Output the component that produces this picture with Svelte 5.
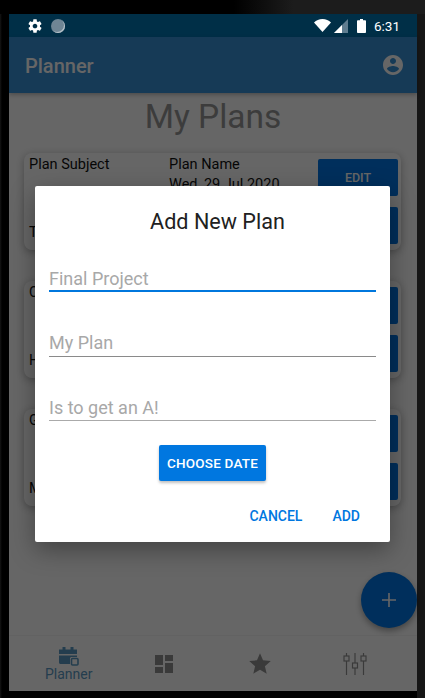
<script lang="ts">
  const plans = [
    { subject: 'Plan Subject', name: 'Plan Name', date: 'Wed, 29 Jul 2020', note: 'To do' },
    { subject: 'Calculus', name: 'Plan Name', date: 'Wed, 29 Jul 2020', note: 'Homework' },
    { subject: 'Geography', name: 'Plan Name', date: 'Wed, 29 Jul 2020', note: 'Maps' }
  ];

  const fields = [
    { placeholder: 'Final Project', kind: 'focused' },
    { placeholder: 'My Plan', kind: 'dark' },
    { placeholder: 'Is to get an A!', kind: 'light' }
  ];
</script>

<div class="device">
  <div class="screen">
    <div class="status-bar">
      <div class="status-left">
        <svg width="16" height="16" viewBox="0 0 24 24" fill="#fff">
          <path d="M19.43 12.98c.04-.32.07-.64.07-.98s-.03-.66-.07-.98l2.11-1.65c.19-.15.24-.42.12-.64l-2-3.46c-.12-.22-.39-.3-.61-.22l-2.49 1c-.52-.4-1.08-.73-1.69-.98l-.38-2.65C14.46 2.18 14.25 2 14 2h-4c-.25 0-.46.18-.49.42l-.38 2.65c-.61.25-1.17.59-1.69.98l-2.49-1c-.23-.09-.49 0-.61.22l-2 3.46c-.13.22-.07.49.12.64l2.11 1.65c-.04.32-.07.65-.07.98s.03.66.07.98l-2.11 1.65c-.19.15-.24.42-.12.64l2 3.46c.12.22.39.3.61.22l2.49-1c.52.4 1.08.73 1.69.98l.38 2.65c.03.24.24.42.49.42h4c.25 0 .46-.18.49-.42l.38-2.65c.61-.25 1.17-.59 1.69-.98l2.49 1c.23.09.49 0 .61-.22l2-3.46c.12-.22.07-.49-.12-.64l-2.11-1.65zM12 15.5c-1.93 0-3.5-1.57-3.5-3.5s1.57-3.5 3.5-3.5 3.5 1.57 3.5 3.5-1.57 3.5-3.5 3.5z" />
        </svg>
        <span class="sync-dot"></span>
      </div>
      <div class="status-right">
        <svg width="17" height="13" viewBox="0 0 17 13" fill="#fff"><path d="M0 3.6C2.2 1.4 5.2 0 8.5 0S14.8 1.4 17 3.6L8.5 13z" /></svg>
        <svg class="signal" width="14" height="14" viewBox="0 0 14 14">
          <path d="M14 0V14H0z" fill="#5f7d90" />
          <path d="M8 6V14H0z" fill="#fff" />
        </svg>
        <svg class="battery" width="9" height="14" viewBox="0 0 9 14" fill="#fff"><path d="M3 0h3v1.2h2.2c.4 0 .8.4.8.8v11.2c0 .4-.4.8-.8.8H.8c-.4 0-.8-.4-.8-.8V2c0-.4.4-.8.8-.8H3z" /></svg>
        <span class="time">6:31</span>
      </div>
    </div>

    <div class="stage">
      <header class="app-bar">
        <span class="app-title">Planner</span>
        <svg width="24" height="24" viewBox="0 0 24 24" fill="#fff">
          <path d="M12 2C6.48 2 2 6.48 2 12s4.48 10 10 10 10-4.48 10-10S17.52 2 12 2zm0 3c1.66 0 3 1.34 3 3s-1.34 3-3 3-3-1.34-3-3 1.34-3 3-3zm0 14.2c-2.5 0-4.71-1.28-6-3.22.03-1.99 4-3.08 6-3.08 1.99 0 5.97 1.09 6 3.08-1.29 1.94-3.5 3.22-6 3.22z" />
        </svg>
      </header>

      <main class="content">
        <h1>My Plans</h1>
        <div class="plan-list">
          {#each plans as plan}
            <div class="plan-card">
              <div class="plan-subject">
                <span>{plan.subject}</span>
                <span>{plan.note}</span>
              </div>
              <div class="plan-name">
                <span>{plan.name}</span>
                <span>{plan.date}</span>
              </div>
              <div class="plan-actions">
                <button type="button">EDIT</button>
                <button type="button">DELETE</button>
              </div>
            </div>
          {/each}
        </div>
      </main>

      <nav class="tab-bar">
        <div class="tab active">
          <svg width="20" height="19" viewBox="0 0 20 19">
            <path d="M0 2.5h3.5V0h3v2.5h5V0h3v2.5H18V7H0zM0 8.5h18V10h-5.5c-.8 0-1.5.7-1.5 1.5V17H1.5C.7 17 0 16.3 0 15.5z" fill="#5b9ac4" />
            <rect x="12.5" y="11.5" width="6.5" height="6.5" rx="1" fill="none" stroke="#5b9ac4" stroke-width="1.6" />
          </svg>
          <span>Planner</span>
        </div>
        <div class="tab">
          <svg width="24" height="24" viewBox="0 0 24 24" fill="#929292">
            <path d="M3 13h8V3H3v10zm0 8h8v-6H3v6zm10 0h8V11h-8v10zm0-18v6h8V3h-8z" />
          </svg>
        </div>
        <div class="tab">
          <svg width="26" height="26" viewBox="0 0 24 24" fill="#929292">
            <path d="M12 17.27L18.18 21l-1.64-7.03L22 9.24l-7.19-.61L12 2 9.19 8.63 2 9.24l5.46 4.73L5.82 21z" />
          </svg>
        </div>
        <div class="tab">
          <svg width="24" height="22" viewBox="0 0 24 22" fill="none" stroke="#929292" stroke-width="1.2">
            <path d="M3.5 0v3M3.5 8v14M12 0v10M12 15v7M20.5 0v3M20.5 8v14" />
            <rect x="1" y="3" width="5" height="5" />
            <rect x="9.5" y="10" width="5" height="5" />
            <rect x="18" y="3" width="5" height="5" />
          </svg>
        </div>
      </nav>

      <button type="button" class="fab" aria-label="Add">
        <svg width="16" height="16" viewBox="0 0 16 16" fill="none" stroke="#fff" stroke-width="1.6"><path d="M8 1v14M1 8h14" /></svg>
      </button>

      <div class="scrim">
        <div class="dialog">
          <h2>Add New Plan</h2>
          <div class="fields">
            {#each fields as field}
              <input class={field.kind} type="text" placeholder={field.placeholder} />
            {/each}
          </div>
          <button type="button" class="choose-date">CHOOSE DATE</button>
          <div class="dialog-actions">
            <button type="button">CANCEL</button>
            <button type="button">ADD</button>
          </div>
        </div>
      </div>
    </div>
  </div>
</div>

<style>
  :global(body) {
    margin: 0;
    background: #000;
    font-family: Roboto, "Liberation Sans", sans-serif;
  }

  button {
    font-family: inherit;
    border: none;
    cursor: pointer;
  }

  .device {
    box-sizing: border-box;
    width: 425px;
    height: 698px;
    padding: 14px 8px 7px 9px;
    background:
      linear-gradient(90deg, #000 0, #000 55%, #1c1c1c 69%) top / 100% 14px no-repeat,
      linear-gradient(90deg, #161616 0, #000 2px, #000 98%, #161616 98%);
  }

  .screen {
    display: flex;
    flex-direction: column;
    height: 100%;
  }

  .status-bar {
    flex: none;
    display: flex;
    align-items: center;
    justify-content: space-between;
    height: 23px;
    padding: 0 17px 0 18px;
    background: #002f47;
    color: #fff;
  }

  .status-left {
    display: flex;
    align-items: center;
    gap: 8px;
  }

  .sync-dot {
    width: 14px;
    height: 14px;
    border-radius: 50%;
    background: #6f8594;
    box-shadow: inset -1px -1px 0 #b4c0c8;
  }

  .status-right {
    display: flex;
    align-items: center;
    gap: 3px;
  }

  .battery {
    margin-left: 6px;
  }

  .time {
    margin-left: 5px;
    font-size: 13.5px;
  }

  .stage {
    position: relative;
    flex: 1;
    display: flex;
    flex-direction: column;
    min-height: 0;
    background: #fff;
  }

  .app-bar {
    flex: none;
    display: flex;
    align-items: center;
    justify-content: space-between;
    height: 56px;
    padding: 0 12px 0 16px;
    background: #3791d7;
    box-shadow: 0 2px 4px rgba(0, 0, 0, 0.25);
  }

  .app-title {
    padding-top: 2px;
    font-size: 20px;
    font-weight: 500;
    color: #fff;
  }

  .content {
    flex: 1;
    min-height: 0;
  }

  h1 {
    margin: 0 0 12px;
    font-size: 33.5px;
    font-weight: 400;
    line-height: 48px;
    text-align: center;
    color: #979797;
  }

  .plan-list {
    display: flex;
    flex-direction: column;
    gap: 31px;
    padding: 0 16px 0 15px;
  }

  .plan-card {
    display: flex;
    height: 97px;
    box-sizing: border-box;
    padding: 6px 3px 6px 5px;
    border-radius: 8px;
    background: #fff;
    box-shadow: 0 2px 8px rgba(0, 0, 0, 0.3);
    font-size: 14.5px;
    color: #111;
  }

  .plan-subject {
    display: flex;
    flex-direction: column;
    justify-content: space-between;
    width: 140px;
    margin: -3px 0 3px;
  }

  .plan-name {
    display: flex;
    flex-direction: column;
    gap: 3px;
    flex: 1;
    margin-top: -3px;
  }

  .plan-actions {
    display: flex;
    flex-direction: column;
    gap: 11px;
    width: 80px;
  }

  .plan-actions button {
    height: 37px;
    padding: 0;
    border-radius: 2px;
    background: #0077e6;
    font-size: 12.5px;
    font-weight: 500;
    color: #fff;
  }

  .tab-bar {
    flex: none;
    display: flex;
    height: 56px;
    padding: 0 14px 0 12px;
    border-top: 1px solid #f6f6f6;
    box-sizing: border-box;
  }

  .tab {
    flex: 1;
    display: flex;
    flex-direction: column;
    align-items: center;
    justify-content: center;
  }

  .tab.active {
    justify-content: flex-start;
    padding-top: 11px;
    gap: 0;
    font-size: 14px;
    line-height: 17px;
    color: #5b9ac4;
  }

  .fab {
    position: absolute;
    right: 0;
    bottom: 63px;
    display: grid;
    place-items: center;
    width: 56px;
    height: 56px;
    padding: 0;
    border-radius: 50%;
    background: #0077e6;
    box-shadow: 0 3px 6px rgba(0, 0, 0, 0.35);
  }

  .scrim {
    position: absolute;
    inset: 0;
    display: flex;
    align-items: center;
    justify-content: center;
    background: rgba(0, 0, 0, 0.6);
  }

  .dialog {
    box-sizing: border-box;
    width: 355px;
    height: 356px;
    padding: 21px 14px 0;
    border-radius: 2px;
    background: #fff;
    box-shadow: 0 8px 24px rgba(0, 0, 0, 0.35);
    display: flex;
    flex-direction: column;
    margin-left: -1px;
  }

  h2 {
    margin: 0;
    padding-left: 10px;
    font-size: 21.6px;
    font-weight: 400;
    line-height: 30px;
    text-align: center;
    color: #212121;
  }

  .fields {
    display: flex;
    flex-direction: column;
    gap: 29.5px;
    margin-top: 20px;
  }

  input {
    box-sizing: border-box;
    width: 100%;
    height: 35px;
    padding: 8px 0 0;
    border: none;
    border-bottom: 1px solid #8a8a8a;
    outline: none;
    background: none;
    font-family: inherit;
    font-size: 18px;
  }

  input::placeholder {
    color: #a8a8a8;
    opacity: 1;
  }

  input.focused {
    padding-top: 9px;
    border-bottom: 2px solid #0077dd;
  }

  input.light {
    border-bottom-color: #aaa;
  }

  .choose-date {
    align-self: center;
    height: 36px;
    width: 107px;
    margin-top: 24px;
    padding: 0;
    border-radius: 2px;
    background: #0077e0;
    box-shadow: 0 2px 3px rgba(0, 0, 0, 0.25);
    font-size: 13.5px;
    font-weight: 500;
    letter-spacing: 0.2px;
    color: #fff;
  }

  .dialog-actions {
    display: flex;
    justify-content: flex-end;
    gap: 30px;
    margin-top: 27px;
    padding-right: 16px;
  }

  .dialog-actions button {
    padding: 0;
    background: none;
    font-size: 14px;
    font-weight: 500;
    line-height: 16px;
    color: #0077e0;
  }
</style>
